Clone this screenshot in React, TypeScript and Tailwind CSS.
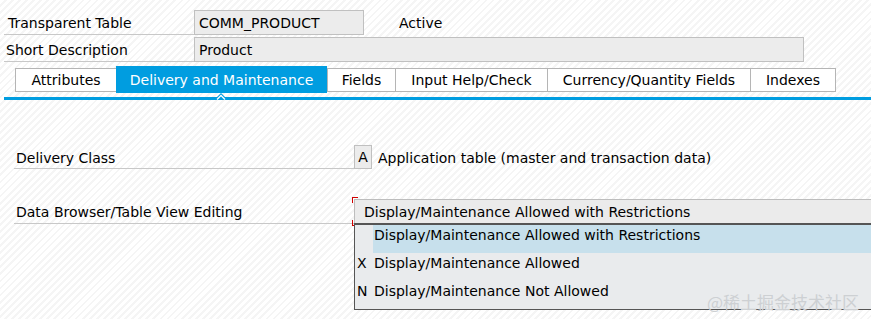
export default function App() {
  return (
    <div className="relative h-[319px] w-[871px] overflow-hidden bg-[repeating-linear-gradient(135deg,#ffffff_0px,#ffffff_3px,#f5f5f5_3px,#f5f5f5_5px)] font-['DejaVu_Sans',sans-serif] text-[14px] text-black">
      {/* Header fields */}
      <div className="flex items-center pt-[10px]">
        <div className="ml-[4px] flex h-[24px] w-[190px] shrink-0 items-center border-b border-[#c8c8c8] pl-[4px] pt-[2px]">
          Transparent Table
        </div>
        <div className="flex h-[25px] w-[170px] shrink-0 items-center border border-[#c0c0c0] bg-[#ececec] pl-[4px] pt-[1px]">
          COMM_PRODUCT
        </div>
        <div className="ml-[35px] pt-[2px]">Active</div>
      </div>
      <div className="mt-[2px] flex items-center">
        <div className="ml-[4px] flex h-[24px] w-[190px] shrink-0 items-center border-b border-[#c8c8c8] pl-[2px] pt-[2px]">
          Short Description
        </div>
        <div className="flex h-[25px] w-[610px] shrink-0 items-center border border-[#c0c0c0] bg-[#ececec] pl-[4px] pt-[1px]">
          Product
        </div>
      </div>

      {/* Tabs */}
      <div className="ml-[15px] mt-[4px] flex h-[27px] items-center">
        <div className="flex h-[24px] w-[101px] shrink-0 items-center justify-center border border-r-0 border-[#b5b5b5] bg-white pt-[1px]">
          Attributes
        </div>
        <div className="flex h-[27px] w-[211px] shrink-0 items-center justify-center bg-[#009de0] pt-[1px] text-white">
          Delivery and Maintenance
        </div>
        <div className="flex h-[24px] w-[69px] shrink-0 items-center justify-center border border-[#b5b5b5] bg-white pt-[1px]">
          Fields
        </div>
        <div className="flex h-[24px] w-[152px] shrink-0 items-center justify-center border border-l-0 border-[#b5b5b5] bg-white pt-[1px]">
          Input Help/Check
        </div>
        <div className="flex h-[24px] w-[203px] shrink-0 items-center justify-center border border-l-0 border-[#b5b5b5] bg-white pt-[1px]">
          Currency/Quantity Fields
        </div>
        <div className="flex h-[24px] w-[85px] shrink-0 items-center justify-center border border-l-0 border-[#b5b5b5] bg-white pt-[1px]">
          Indexes
        </div>
      </div>
      <div className="relative ml-[4px] mt-[4px] h-[3px] bg-[#009de0]">
        <svg className="absolute left-[210px] top-[-4px]" width="14" height="7" viewBox="0 0 14 7">
          <path d="M0 7 L7 0 L14 7 Z" fill="#009de0" />
          <path d="M3 6.5 L7 2.5 L11 6.5" fill="none" stroke="#ffffff" strokeWidth="1.3" />
        </svg>
      </div>

      {/* Delivery class */}
      <div className="mt-[45px] flex items-center">
        <div className="ml-[14px] flex h-[24px] w-[340px] shrink-0 items-center border-b border-[#c8c8c8] pl-[2px] pt-[3px]">
          Delivery Class
        </div>
        <div className="flex h-[24px] w-[18px] shrink-0 items-center justify-center border border-[#c0c0c0] bg-[#ececec] pt-[1px]">
          A
        </div>
        <div className="ml-[6px] pt-[2px]">Application table (master and transaction data)</div>
      </div>

      {/* Data browser */}
      <div className="mt-[30px] flex items-center">
        <div className="ml-[14px] flex h-[24px] w-[340px] shrink-0 items-center border-b border-[#c8c8c8] pl-[2px] pt-[3px]">
          Data Browser/Table View Editing
        </div>
        <div className="relative shrink-0">
          <div className="flex h-[25px] w-[530px] items-center border border-[#bdbdbd] bg-[#ebebeb] pl-[9px] pt-[1px]">
            Display/Maintenance Allowed with Restrictions
          </div>
          {/* focus corners */}
          <div className="absolute left-[-2px] top-[-2px] h-[6px] w-[6px] border-l border-t border-[#d00000]" />
          <div className="absolute bottom-[-2px] left-[-2px] h-[6px] w-[6px] border-b border-l border-[#d00000]" />

          {/* dropdown list */}
          <div className="absolute left-0 top-[24px] w-[530px] border-b border-l border-t-2 border-[#555555] bg-[#e9ebed]">
            <div className="flex h-[28px] items-start">
              <div className="w-[18px] pl-[2px]" />
              <div className="h-full flex-1 bg-[#c7e0ec] pl-[1px]">
                Display/Maintenance Allowed with Restrictions
              </div>
            </div>
            <div className="flex h-[28px] items-start">
              <div className="w-[18px] pl-[2px]">X</div>
              <div className="pl-[1px]">Display/Maintenance Allowed</div>
            </div>
            <div className="flex h-[28px] items-start">
              <div className="w-[18px] pl-[2px]">N</div>
              <div className="pl-[1px]">Display/Maintenance Not Allowed</div>
            </div>
          </div>
        </div>
      </div>

      {/* watermark */}
      <div className="absolute bottom-[6px] right-[12px] font-['Noto_Sans_CJK_SC',sans-serif] text-[17px] leading-[22px] text-[#cdd0d3]">
        @稀土掘金技术社区
      </div>
    </div>
  );
}
